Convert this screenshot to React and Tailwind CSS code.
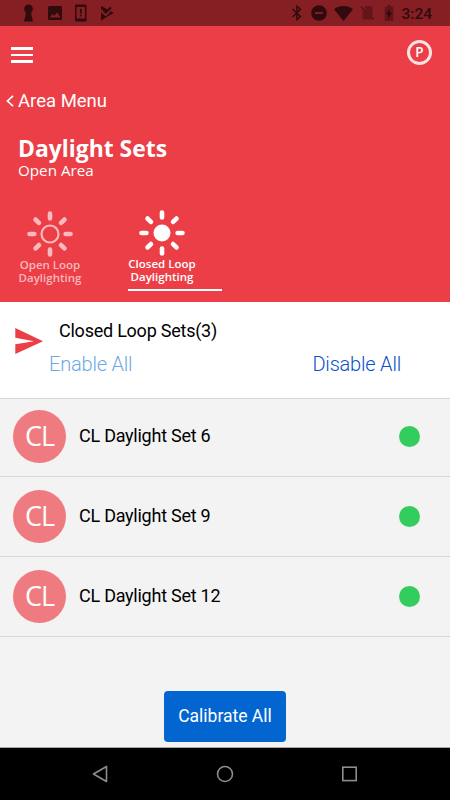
import React, { useState } from 'react';

const SETS = [
  { id: 6, name: 'CL Daylight Set 6', active: true },
  { id: 9, name: 'CL Daylight Set 9', active: true },
  { id: 12, name: 'CL Daylight Set 12', active: true },
];

const RAY_ANGLES = [0, 45, 90, 135, 180, 225, 270, 315];

const SunIcon = ({ filled, className }) => (
  <svg viewBox="0 0 46 46" className={className} fill="none" stroke="currentColor">
    <circle cx="23" cy="23" r={filled ? 7.4 : 8.5} strokeWidth="2.2" fill={filled ? 'currentColor' : 'none'} />
    {RAY_ANGLES.map((angle) => (
      <path key={angle} d="M23 2.500v4.900" strokeWidth="4.600" strokeLinecap="round" transform={`rotate(${angle} 23 23)`} />
    ))}
  </svg>
);

const StatusBar = () => (
  <div className="flex h-[26px] shrink-0 items-center justify-between bg-[#851f24] pr-[17px] pl-[22px] text-[#300a0c]">
    <div className="flex items-center gap-[12px]">
      <svg viewBox="0 0 14 18" className="h-[18px] w-[14px]" fill="currentColor">
        <path d="M6.500 0.500a4.500 4.500 0 0 0-3 7.800L3.800 10 2 17.500h9L9.200 10l.3-1.700a4.500 4.500 0 0 0-3-7.800z" />
      </svg>
      <svg viewBox="0 0 14 14" className="h-[14px] w-[14px]" fill="currentColor" fillRule="evenodd">
        <path d="M1.500 0h11A1.500 1.500 0 0 1 14 1.500v11a1.500 1.500 0 0 1-1.500 1.500h-11A1.500 1.500 0 0 1 0 12.500v-11A1.500 1.500 0 0 1 1.500 0zM2 11.500h10.500L9 6.500l-3 3.500-1.500-2z" />
      </svg>
      <svg viewBox="0 0 14 18" className="h-[18px] w-[14px]" fill="currentColor" fillRule="evenodd">
        <path d="M2 0.500h9.500a1 1 0 0 1 1 1v15a1 1 0 0 1-1 1H2a1 1 0 0 1-1-1v-15a1 1 0 0 1 1-1zM2.600 3v11.500h8.300V3zM5.900 4.700h1.800v4.700H5.900zM5.900 10.700h1.800v1.800H5.900z" />
      </svg>
      <svg viewBox="0 0 14 16" className="h-[16px] w-[14px]">
        <path d="M1 1l12.800 6.700L1 15.500z" fill="currentColor" />
        <path d="M1 5.200l4.700 4.300L13 2" fill="none" stroke="#851f24" strokeWidth="3" />
        <path d="M3 4.500l2.800 3 5.200-5" fill="none" stroke="currentColor" strokeWidth="2.200" />
      </svg>
    </div>
    <div className="flex items-center">
      <svg viewBox="0 0 12 16" className="h-[16px] w-[12px]" fill="none" stroke="currentColor" strokeWidth="1.500">
        <path d="M1.500 4l8 7.500L6 14.700V1.300l3.500 3.200-8 7.500" />
      </svg>
      <svg viewBox="0 0 16 16" className="ml-[8px] h-[16px] w-[16px]">
        <circle cx="8" cy="8" r="7.800" fill="currentColor" />
        <path d="M4 8h8" stroke="#851f24" strokeWidth="1.900" />
      </svg>
      <svg viewBox="0 0 19 15" className="ml-[7px] h-[15px] w-[19px]" fill="currentColor">
        <path d="M0 3.200C5.500-1 13.500-1 19 3.200L9.500 15z" />
      </svg>
      <svg viewBox="0 0 14 16" className="ml-[7px] h-[16px] w-[14px]">
        <path d="M6 1h5.500a1 1 0 0 1 1 1v10.500L4.300 3zM2.500 4.700l9.700 9.800H2.500z" fill="#641519" />
        <path d="M0.800 1.500l12.700 13" stroke="#511116" strokeWidth="1.200" />
      </svg>
      <svg viewBox="0 0 10 16" className="ml-[10px] h-[16px] w-[10px]">
        <path d="M3 0h4v1.800h2.300V16H0.700V1.800H3z" fill="#601419" />
        <path d="M5.500 3.500L2 9.500h2.300v4L8 7.700H5.500z" fill="currentColor" />
      </svg>
      <span className="mt-[3px] mr-px ml-[7px] font-[Roboto] text-[15.500px] leading-none font-medium">3:24</span>
    </div>
  </div>
);

const LoopTab = ({ label, filled, active, onClick, className }) => (
  <button
    onClick={onClick}
    className={`flex flex-col items-start border-b-2 font-['Open_Sans'] text-[11.500px] leading-[13px] font-semibold ${
      active ? 'border-white text-white' : 'border-transparent text-[#f9b9bd]'
    } ${className}`}
  >
    <span className="flex w-[68px] flex-col items-center">
      <SunIcon filled={filled} className="h-[46px] w-[46px]" />
      <span className="mt-[1px] whitespace-nowrap">{label}</span>
      <span>Daylighting</span>
    </span>
  </button>
);

const Header = ({ tab, setTab }) => (
  <header className="flex h-[276px] shrink-0 flex-col bg-[#eb3e46] text-white">
    <div className="flex h-[58px] items-center justify-between pr-[18px] pl-[11px]">
      <button className="flex w-[22px] flex-col gap-[4px]">
        <span className="h-[3px] bg-white" />
        <span className="h-[2px] bg-white" />
        <span className="h-[3px] bg-white" />
      </button>
      <button className="mb-[5px] flex h-[25px] w-[25px] items-center justify-center rounded-full border-3 border-white/85 font-['Open_Sans'] text-[13.500px] leading-none font-semibold">
        P
      </button>
    </div>
    <button className="mt-px flex h-[34px] items-center pl-[6px] font-[Roboto] text-[18.500px]">
      <svg viewBox="0 0 8 12" className="mb-[2px] h-[12px] w-[8px]" fill="none" stroke="currentColor" strokeWidth="1.700">
        <path d="M7 0.800L1.500 6 7 11.200" />
      </svg>
      <span className="ml-[4px]">Area Menu</span>
    </button>
    <div className="mt-[16px] pl-[18px] font-['Open_Sans']">
      <h1 className="text-[22.900px] leading-[28px] font-bold">Daylight Sets</h1>
      <p className="-mt-px text-[15.200px] leading-[16px]">Open Area</p>
    </div>
    <div className="mt-[32px] flex items-start">
      <LoopTab
        label="Open Loop"
        filled={false}
        active={tab === 'open'}
        onClick={() => setTab('open')}
        className="mt-[1px] ml-[16px] w-[94px]"
      />
      <LoopTab
        label="Closed Loop"
        filled
        active={tab === 'closed'}
        onClick={() => setTab('closed')}
        className="ml-[18px] h-[81px] w-[94px]"
      />
    </div>
  </header>
);

const SetRow = ({ set }) => (
  <li className="flex h-[80px] items-center border-b border-[#d8d8d8] pr-[30px] pl-[13px]">
    <span className="flex h-[53px] w-[53px] items-center justify-center rounded-full bg-[#ef7b80] pb-[2px] font-['Open_Sans'] text-[27px] leading-none tracking-[-1px] text-white">
      CL
    </span>
    <span className="mb-[2px] ml-[13px] flex-1 text-[18px] tracking-[-0.250px] text-black">{set.name}</span>
    <span className={`h-[21px] w-[21px] rounded-full ${set.active ? 'bg-[#32cd5d]' : 'bg-gray-400'}`} />
  </li>
);

const NavBar = () => (
  <nav className="flex h-[53px] shrink-0 items-center justify-between border-t border-[#a8a8a8] bg-black pr-[92px] pl-[92px]">
    <svg viewBox="0 0 17 18" className="h-[18px] w-[17px]" fill="none" stroke="#8d8d8d" strokeWidth="1.600">
      <path d="M14.500 1.500v15L1.500 9z" strokeLinejoin="round" />
    </svg>
    <svg viewBox="0 0 18 18" className="h-[18px] w-[18px]" fill="none" stroke="#8d8d8d" strokeWidth="1.600">
      <circle cx="9" cy="9" r="7.500" />
    </svg>
    <svg viewBox="0 0 17 18" className="h-[18px] w-[17px]" fill="none" stroke="#8d8d8d" strokeWidth="1.600">
      <rect x="1.800" y="2.200" width="13.400" height="13.400" />
    </svg>
  </nav>
);

const App = () => {
  const [tab, setTab] = useState('closed');

  return (
    <div className="flex h-[800px] w-[450px] flex-col overflow-hidden bg-[#f3f3f3] font-[Roboto,sans-serif]">
      <StatusBar />
      <Header tab={tab} setTab={setTab} />
      <section className="flex h-[97px] shrink-0 border-b border-[#d8d8d8] bg-white">
        <svg viewBox="0 0 28 26" className="mt-[26px] ml-[15px] h-[26px] w-[28px]" fill="#eb3e46">
          <path d="M0.300 0L28 13.200 0.300 26V16.200L19 13.200 0.300 9.800z" />
        </svg>
        <div className="flex-1 pt-[17px]">
          <h2 className="ml-[16px] text-[18px] leading-[24px] tracking-[-0.240px] text-black">Closed Loop Sets(3)</h2>
          <div className="mt-[7px] flex justify-between pr-[49px] pl-[6px] text-[20px] leading-[28px] font-[350] tracking-[-0.200px]">
            <button className="text-[#6ca9e6]">Enable All</button>
            <button className="text-[#0b50c8]">Disable All</button>
          </div>
        </div>
      </section>
      <ul className="-mt-[2px]">
        {SETS.map((set) => (
          <SetRow key={set.id} set={set} />
        ))}
      </ul>
      <div className="flex flex-1 items-end justify-center pb-[5px]">
        <button className="h-[51px] w-[122px] rounded-[4px] bg-[#0366d0] text-[17.500px] text-white">Calibrate All</button>
      </div>
      <NavBar />
    </div>
  );
};

export default App;
